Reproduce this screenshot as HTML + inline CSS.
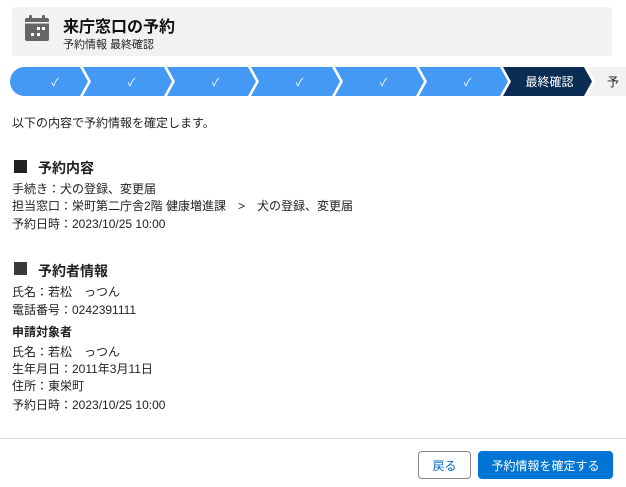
<!DOCTYPE html>
<html><head><meta charset="utf-8"><style>
*{margin:0;padding:0;box-sizing:border-box}
body{width:626px;height:487px;background:#fff;font-family:"Liberation Sans","Noto Sans CJK JP",sans-serif;color:#222;position:relative;overflow:hidden}
.a{position:absolute;white-space:nowrap}
.hdr{left:12px;top:7px;width:600px;height:49px;background:#f2f2f2;border-radius:4px}
.seg{position:absolute;top:67px;height:29px;background:#4499f5;color:#fff;font-size:11px;display:flex;align-items:center;justify-content:center;padding-left:8px}
.t{font-size:12px;line-height:18px}
.h{font-size:14px;font-weight:bold}
.sq{position:absolute;width:13px;height:13px;background:#222}
</style></head><body>
<div class="a hdr"></div>
<svg class="a" style="left:24px;top:14px" width="26" height="28" viewBox="0 0 26 28">
<rect x="5" y="1" width="3" height="5" rx="1" fill="#666"/><rect x="18" y="1" width="3" height="5" rx="1" fill="#666"/>
<rect x="1" y="4" width="24" height="23" rx="2" fill="#666"/>
<rect x="1" y="8" width="24" height="1.5" fill="#f2f2f2"/>
<rect x="13" y="13" width="3" height="3" fill="#fff"/><rect x="18" y="13" width="3" height="3" fill="#fff"/>
<rect x="7" y="19" width="3" height="3" fill="#fff"/><rect x="13" y="19" width="3" height="3" fill="#fff"/>
</svg>
<div class="a" style="left:63px;top:13px;font-size:16px;font-weight:bold;color:#111">来庁窓口の予約</div>
<div class="a" style="left:63px;top:36px;font-size:11px;color:#222">予約情報 最終確認</div>

<div class="seg" style="left:10px;width:78px;border-radius:15px 0 0 15px;clip-path:polygon(0 0,70px 0,78px 50%,70px 100%,0 100%);padding-left:12px">✓</div>
<div class="seg" style="left:83px;width:89px;clip-path:polygon(0 0,81px 0,89px 50%,81px 100%,0 100%,8px 50%)">✓</div>
<div class="seg" style="left:167px;width:89px;clip-path:polygon(0 0,81px 0,89px 50%,81px 100%,0 100%,8px 50%)">✓</div>
<div class="seg" style="left:251px;width:89px;clip-path:polygon(0 0,81px 0,89px 50%,81px 100%,0 100%,8px 50%)">✓</div>
<div class="seg" style="left:335px;width:89px;clip-path:polygon(0 0,81px 0,89px 50%,81px 100%,0 100%,8px 50%)">✓</div>
<div class="seg" style="left:419px;width:89px;clip-path:polygon(0 0,81px 0,89px 50%,81px 100%,0 100%,8px 50%)">✓</div>
<div class="seg" style="left:503px;width:89px;background:#0b2d55;font-size:12px;clip-path:polygon(0 0,81px 0,89px 50%,81px 100%,0 100%,8px 50%);padding-left:4px">最終確認</div>
<div class="seg" style="left:587px;width:60px;background:#f2f2f2;color:#222;font-size:12px;justify-content:flex-start;padding-left:20px;clip-path:polygon(0 0,60px 0,60px 100%,0 100%,8px 50%)">予</div>

<div class="a t" style="left:12px;top:114px">以下の内容で予約情報を確定します。</div>
<div class="sq" style="left:14px;top:160px"></div>
<div class="a h" style="left:38px;top:158px">予約内容</div>
<div class="a t" style="left:12px;top:180px">手続き：犬の登録、変更届</div>
<div class="a t" style="left:12px;top:197px">担当窓口：栄町第二庁舎2階 健康増進課　&gt;　犬の登録、変更届</div>
<div class="a t" style="left:12px;top:215px">予約日時：2023/10/25 10:00</div>

<div class="sq" style="left:14px;top:262px;background:#3a3a3a"></div>
<div class="a h" style="left:38px;top:261px">予約者情報</div>
<div class="a t" style="left:12px;top:283px">氏名：若松　っつん</div>
<div class="a t" style="left:12px;top:301px">電話番号：0242391111</div>
<div class="a t" style="left:12px;top:323px;font-weight:bold">申請対象者</div>
<div class="a t" style="left:12px;top:343px">氏名：若松　っつん</div>
<div class="a t" style="left:12px;top:360px">生年月日：2011年3月11日</div>
<div class="a t" style="left:12px;top:377px">住所：東栄町</div>
<div class="a t" style="left:12px;top:396px">予約日時：2023/10/25 10:00</div>

<div class="a" style="left:0;top:438px;width:626px;height:1px;background:#ddd"></div>
<div class="a" style="left:418px;top:451px;width:53px;height:28px;border:1px solid #888;border-radius:4px;font-size:12px;color:#0068c8;display:flex;align-items:center;justify-content:center">戻る</div>
<div class="a" style="left:478px;top:451px;width:135px;height:28px;background:#0074d4;border-radius:4px;font-size:12px;color:#fff;display:flex;align-items:center;justify-content:center">予約情報を確定する</div>
</body></html>
